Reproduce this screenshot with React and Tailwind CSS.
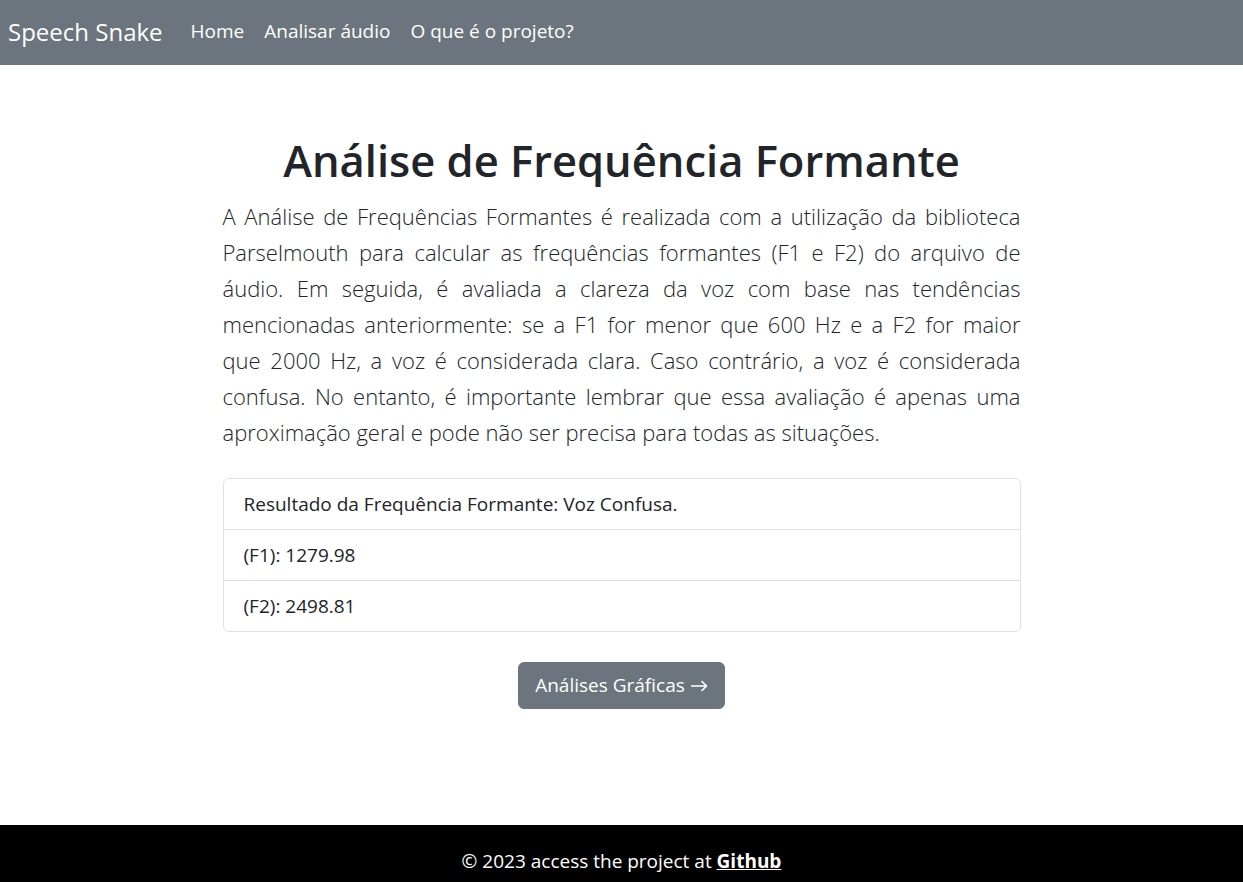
import React from "react";

const links = ["Home", "Analisar áudio", "O que é o projeto?"];

const results = [
  "Resultado da Frequência Formante: Voz Confusa.",
  "(F1): 1279.98",
  "(F2): 2498.81",
];

// lines kept as in the original layout so justification breaks at the same words
const leadLines = [
  "A Análise de Frequências Formantes é realizada com a utilização da biblioteca",
  "Parselmouth para calcular as frequências formantes (F1 e F2) do arquivo de",
  "áudio. Em seguida, é avaliada a clareza da voz com base nas tendências",
  "mencionadas anteriormente: se a F1 for menor que 600 Hz e a F2 for maior",
  "que 2000 Hz, a voz é considerada clara. Caso contrário, a voz é considerada",
  "confusa. No entanto, é importante lembrar que essa avaliação é apenas uma",
  "aproximação geral e pode não ser precisa para todas as situações.",
];

const App = () => {
  return (
    <div className="min-h-screen flex flex-col bg-white text-[#212529] font-['Open_Sans',sans-serif]">
      {/* navbar */}
      <nav className="h-[65px] bg-[#6c757d] flex items-center px-2 pb-[2px] text-white">
        <span className="text-[24px] mr-[28px]">Speech Snake</span>
        <div className="flex gap-[20px] text-[19px]">
          {links.map((l) => (
            <a key={l} href="#" className="text-white">
              {l}
            </a>
          ))}
        </div>
      </nav>

      {/* content */}
      <main className="w-[798px] mx-auto pt-[67px]">
        <h1 className="text-[43.5px] font-semibold leading-[58px] text-center">
          Análise de Frequência Formante
        </h1>
        <p className="mt-2 text-[22px] font-light leading-[36px]">
          {leadLines.map((line, i) => (
            <span
              key={i}
              className={`block ${
                i < leadLines.length - 1 ? "text-justify [text-align-last:justify]" : ""
              }`}
            >
              {line}
            </span>
          ))}
        </p>

        <ul className="mt-[28px] border border-[#dee2e6] rounded-md">
          {results.map((r, i) => (
            <li
              key={r}
              className={`flex items-center px-5 text-[19px] ${
                i > 0 ? "h-[51px] border-t border-[#dee2e6]" : "h-[50px]"
              }`}
            >
              {r}
            </li>
          ))}
        </ul>

        <div className="flex justify-center mt-[30px]">
          <button className="flex items-center gap-[6px] bg-[#6c757d] text-white text-[19px] leading-[29px] px-4 py-2 rounded-md border border-[#6c757d]">
            Análises Gráficas
            <svg width="17" height="12" viewBox="0 0 17 12" fill="none" stroke="currentColor" strokeWidth="1.6">
              <path d="M0 6h15.5M10.5 1l5 5-5 5" />
            </svg>
          </button>
        </div>
      </main>

      {/* footer */}
      <footer className="mt-auto bg-black text-white text-center text-[19px] leading-[27px] pt-[23px] pb-[7px]">
        © 2023 access the project at{" "}
        <a href="#" className="font-bold underline text-white">
          Github
        </a>
      </footer>
    </div>
  );
};

export default App;
